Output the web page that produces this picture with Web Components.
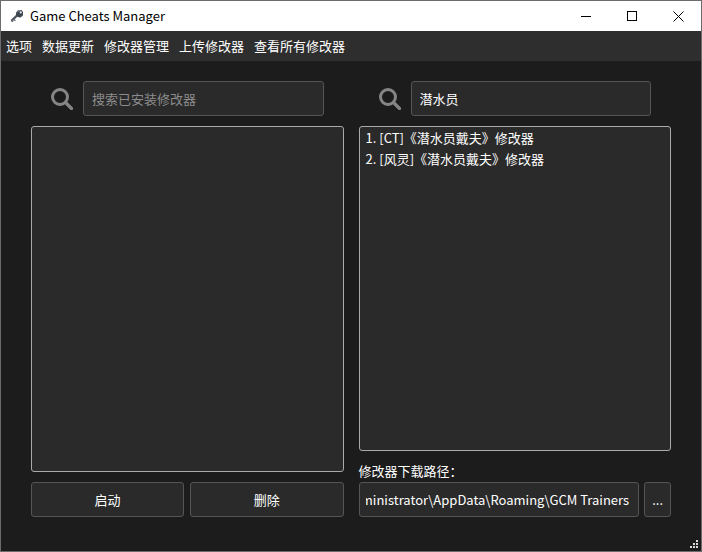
<!DOCTYPE html>
<html lang="zh-CN">
<head>
<meta charset="utf-8">
<title>Game Cheats Manager</title>
<style>
  body {
    margin: 0;
    font: 13px/20px "Noto Sans CJK SC", "Noto Sans", sans-serif;
    color: #fff;
    background: #1c1c1c;
    --panel: #2a2a2a;
    --edge: #555;
    --list-edge: #aaa;
  }
</style>
</head>
<body>
<app-window>
  <title-bar slot="title">Game Cheats Manager</title-bar>
  <menu-bar slot="menu">
    <menu-entry>选项</menu-entry>
    <menu-entry>数据更新</menu-entry>
    <menu-entry>修改器管理</menu-entry>
    <menu-entry>上传修改器</menu-entry>
    <menu-entry>查看所有修改器</menu-entry>
  </menu-bar>
  <trainer-column>
    <search-field slot="search" placeholder="搜索已安装修改器"></search-field>
    <trainer-list></trainer-list>
    <action-row slot="footer">
      <push-button>启动</push-button>
      <push-button>删除</push-button>
    </action-row>
  </trainer-column>
  <trainer-column>
    <search-field slot="search" value="潜水员" placeholder="搜索修改器"></search-field>
    <trainer-list>
      <trainer-item>1. [CT]《潜水员戴夫》修改器</trainer-item>
      <trainer-item>2. [风灵]《潜水员戴夫》修改器</trainer-item>
    </trainer-list>
    <path-picker slot="footer" value="C:\Users\Administrator\AppData\Roaming\GCM Trainers">修改器下载路径：</path-picker>
  </trainer-column>
</app-window>

<script>
const define = (name, html, setup) => {
  const template = document.createElement('template');
  template.innerHTML = html;
  customElements.define(name, class extends HTMLElement {
    constructor() {
      super();
      this.attachShadow({ mode: 'open' }).append(template.content.cloneNode(true));
    }
    connectedCallback() {
      if (setup) setup(this, this.shadowRoot);
    }
  });
};

define('app-window', `
  <style>
    :host { display: flex; flex-direction: column; position: relative; box-sizing: border-box; min-height: 100vh; border: 1px solid #6c6c6c; background: #1c1c1c; }
    main { flex: 1; display: grid; grid-template-columns: repeat(2, minmax(0, 1fr)); gap: 15px; padding: 20px 30px 34px; }
    .grip { position: absolute; right: 2px; bottom: 2px; display: block; fill: #d8d8d8; }
  </style>
  <slot name="title"></slot>
  <slot name="menu"></slot>
  <main><slot></slot></main>
  <svg class="grip" width="9" height="9" viewBox="0 0 9 9" shape-rendering="crispEdges" aria-hidden="true">
    <path d="M6 0h2v2H6zM3 3h2v2H3zM6 3h2v2H6zM0 6h2v2H0zM3 6h2v2H3zM6 6h2v2H6z"/>
  </svg>`);

define('title-bar', `
  <style>
    :host { display: flex; align-items: center; height: 30px; background: #fff; color: #000; }
    .key { margin-left: 8px; margin-right: 5px; }
    h1 { flex: 1; margin: 0; font: inherit; }
    button { display: grid; place-items: center; width: 46px; height: 30px; padding: 0; border: 0; background: none; color: #000; }
    button svg { fill: none; stroke: currentColor; }
  </style>
  <svg class="key" width="16" height="16" viewBox="0 0 16 16" aria-hidden="true">
    <path d="M8.2 7.2 3 12.4" stroke="#4c535c" stroke-width="2.2" stroke-linecap="round"/>
    <path d="m4.6 11 1.8 1.8M2.8 12.6l1.2 1.2" stroke="#6d747c" stroke-width="1.5"/>
    <path d="M9 2.2 12.4 2 14 3.8v3.4L11.6 9.6 8.6 9 7 6.8l.2-2.6z" fill="#3c444e"/>
    <path d="m8.2 4.2 1.6-1.4 2 .1" fill="none" stroke="#87909a"/>
    <circle cx="11.8" cy="4.4" r="1.1" fill="#e6e9ec"/>
  </svg>
  <h1><slot></slot></h1>
  <button aria-label="最小化"><svg width="11" height="11" viewBox="0 0 11 11" shape-rendering="crispEdges"><path d="M0 5.5h10"/></svg></button>
  <button aria-label="最大化"><svg width="11" height="11" viewBox="0 0 11 11" shape-rendering="crispEdges"><path d="M.5 .5h9v9h-9z"/></svg></button>
  <button aria-label="关闭"><svg width="11" height="11" viewBox="0 0 11 11"><path d="m.5 .5 10 10m0-10-10 10"/></svg></button>`);

define('menu-bar', `
  <style>
    :host { display: flex; height: 30px; background: #2e2e2e; }
  </style>
  <slot></slot>`, host => host.setAttribute('role', 'menubar'));

define('menu-entry', `
  <style>
    :host { display: flex; }
    button { padding: 0 5px; border: 0; background: none; color: inherit; font: inherit; white-space: nowrap; }
  </style>
  <button role="menuitem"><slot></slot></button>`);

define('trainer-column', `
  <style>
    :host { display: flex; flex-direction: column; gap: 10px; }
  </style>
  <slot name="search"></slot>
  <slot></slot>
  <slot name="footer"></slot>`);

define('search-field', `
  <style>
    :host { display: block; padding: 0 20px; }
    label { display: flex; align-items: center; gap: 10px; }
    svg { flex: none; }
    input { flex: 1; min-width: 0; box-sizing: border-box; height: 35px; padding: 0 8px; border: 1px solid var(--edge); border-radius: 3px; background: var(--panel); color: inherit; font: inherit; outline: 0; }
    input::placeholder { color: #8c8c8c; opacity: 1; }
  </style>
  <label>
    <svg width="22" height="22" viewBox="0 0 22 22" fill="none" stroke="#858585" aria-hidden="true">
      <circle cx="9" cy="9" r="7.5" stroke-width="3"/>
      <path d="m14.5 14.5 6 6" stroke-width="3.2" stroke-linecap="round"/>
    </svg>
    <input type="text">
  </label>`, (host, root) => {
  const input = root.querySelector('input');
  input.placeholder = host.getAttribute('placeholder') || '';
  input.setAttribute('aria-label', input.placeholder);
  input.value = host.getAttribute('value') || '';
});

define('trainer-list', `
  <style>
    :host { display: block; flex: 1; box-sizing: border-box; padding: 0 6px; border: 1px solid var(--list-edge); border-radius: 3px; background: var(--panel); }
  </style>
  <slot></slot>`, host => host.setAttribute('role', 'list'));

define('trainer-item', `
  <style>
    :host { display: block; line-height: 21px; }
  </style>
  <slot></slot>`, host => host.setAttribute('role', 'listitem'));

define('action-row', `
  <style>
    :host { display: grid; grid-template-columns: 1fr 1fr; gap: 6px; }
  </style>
  <slot></slot>`);

define('push-button', `
  <style>
    :host { display: block; }
    button { width: 100%; height: 35px; padding: 0 7px; border: 1px solid var(--edge); border-radius: 3px; background: var(--panel); color: inherit; font: inherit; }
  </style>
  <button><slot></slot></button>`);

define('path-picker', `
  <style>
    :host { display: block; }
    label { display: block; height: 21px; }
    div { display: flex; gap: 5px; }
    input { flex: 1; min-width: 0; box-sizing: border-box; height: 35px; padding: 0 9px 0 6px; border: 1px solid var(--edge); border-radius: 3px; background: var(--panel); color: inherit; font: inherit; outline: 0; }
  </style>
  <label for="path"><slot></slot></label>
  <div>
    <input id="path" type="text" readonly>
    <push-button>...</push-button>
  </div>`, (host, root) => {
  const input = root.querySelector('input');
  input.value = host.getAttribute('value') || '';
  const showEnd = () => { input.scrollLeft = input.scrollWidth; };
  showEnd();
  new ResizeObserver(showEnd).observe(input);
});
</script>
</body>
</html>
